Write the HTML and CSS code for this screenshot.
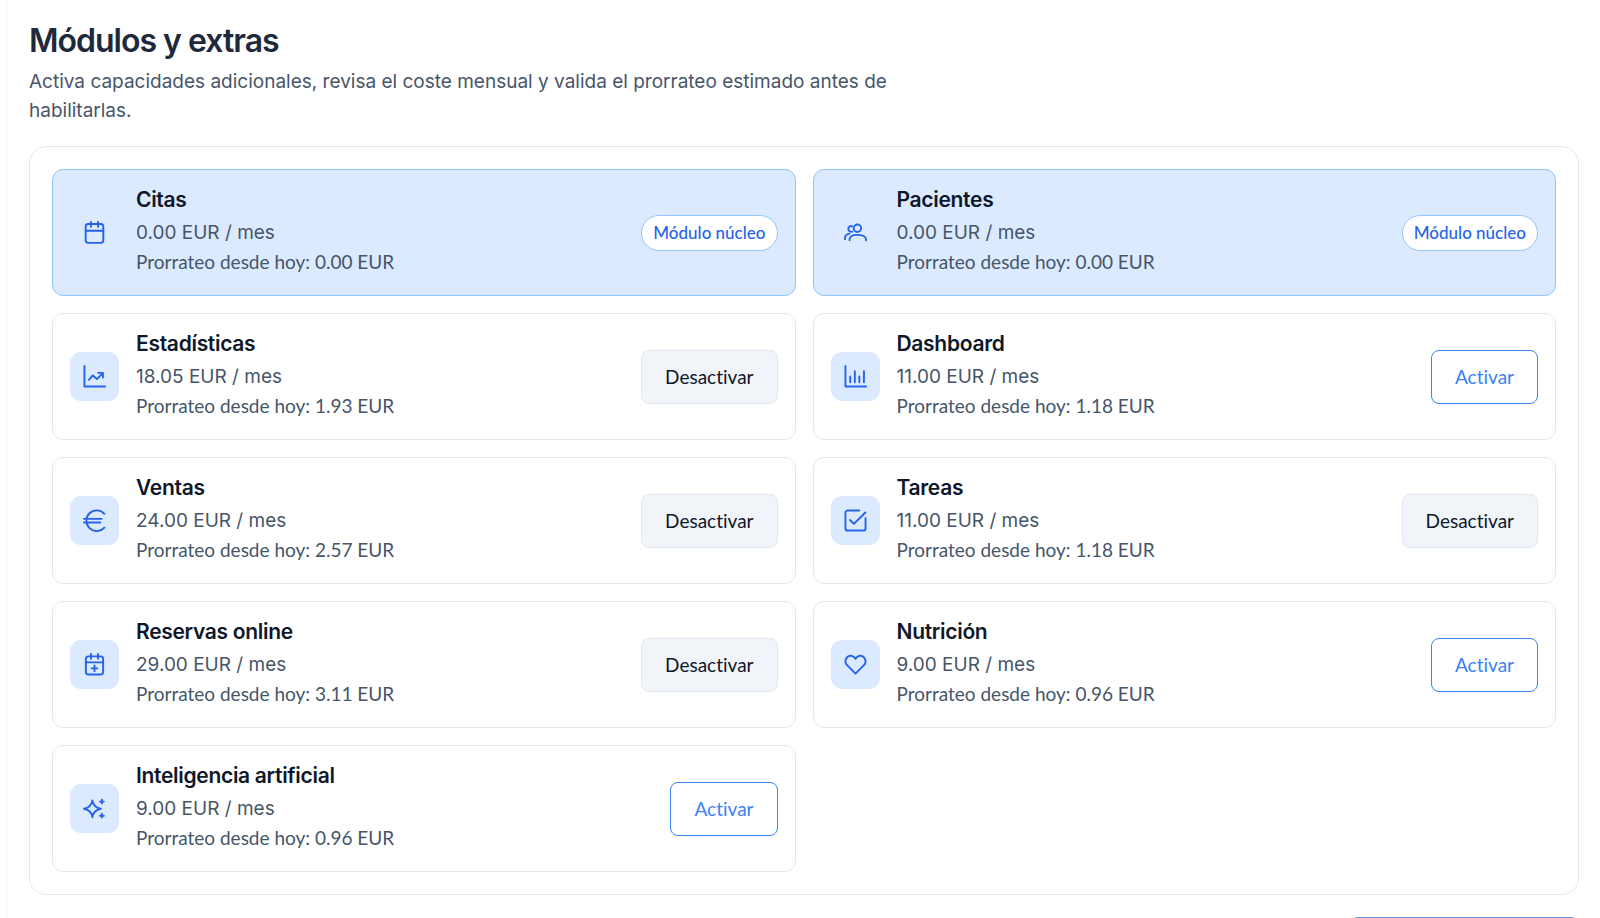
FILE: index.html
```
<!DOCTYPE html>
<html lang="es">
<head>
  <meta charset="UTF-8" />
  <meta name="viewport" content="width=device-width, initial-scale=1.0" />
  <title>Módulos y extras</title>
  <link rel="stylesheet" href="styles.css">
</head>
<body>
  <main class="page">
    <header class="page-header">
      <h1>Módulos y extras</h1>
      <p>Activa capacidades adicionales, revisa el coste mensual y valida el prorrateo estimado antes de habilitarlas.</p>
    </header>

    <section class="panel">
      <article class="module core">
        <div class="module-icon">
          <svg viewBox="0 0 24 24"><rect x="2.8" y="3.2" width="18.4" height="19.6" rx="2.6"/><path d="M2.8 10.2h18.4M8.3 1v5M15.7 1v5"/></svg>
        </div>
        <div class="module-info">
          <h2>Citas</h2>
          <p class="price">0.00 EUR / mes</p>
          <p class="prorate">Prorrateo desde hoy: 0.00 EUR</p>
        </div>
        <span class="badge">Módulo núcleo</span>
      </article>

      <article class="module core">
        <div class="module-icon">
          <svg viewBox="0 0 24 24"><circle cx="14" cy="7.6" r="3.9"/><path d="M5.8 20v-.6c0-3 3-4.9 8.2-4.9s9 1.900 9 4.900v.6M8.600 5.500a3 3 0 1 0 0 5.600M1 19v-.8c0-2.700 1.600-4.400 4.600-5"/></svg>
        </div>
        <div class="module-info">
          <h2>Pacientes</h2>
          <p class="price">0.00 EUR / mes</p>
          <p class="prorate">Prorrateo desde hoy: 0.00 EUR</p>
        </div>
        <span class="badge">Módulo núcleo</span>
      </article>

      <article class="module">
        <div class="module-icon">
          <svg viewBox="0 0 24 24"><path d="M1.500 1v21.500H23M6.200 15.500l4-4.600 4.300 3.800 6.300-6.300M15.800 8.200h5v5"/></svg>
        </div>
        <div class="module-info">
          <h2>Estadísticas</h2>
          <p class="price">18.05 EUR / mes</p>
          <p class="prorate">Prorrateo desde hoy: 1.93 EUR</p>
        </div>
        <button type="button" class="btn btn-off">Desactivar</button>
      </article>

      <article class="module">
        <div class="module-icon">
          <svg viewBox="0 0 24 24"><path d="M1.500 1v21.500H23M6.500 12v6M11.300 6.500V18M16 12v6M20.800 6.500V18"/></svg>
        </div>
        <div class="module-info">
          <h2>Dashboard</h2>
          <p class="price">11.00 EUR / mes</p>
          <p class="prorate">Prorrateo desde hoy: 1.18 EUR</p>
        </div>
        <button type="button" class="btn btn-on">Activar</button>
      </article>

      <article class="module">
        <div class="module-icon">
          <svg viewBox="0 0 24 24"><path d="M22.300 5A10.800 10.800 0 1 0 22.300 19.500M1 10.300h18.500M1 14h17"/></svg>
        </div>
        <div class="module-info">
          <h2>Ventas</h2>
          <p class="price">24.00 EUR / mes</p>
          <p class="prorate">Prorrateo desde hoy: 2.57 EUR</p>
        </div>
        <button type="button" class="btn btn-off">Desactivar</button>
      </article>

      <article class="module">
        <div class="module-icon">
          <svg viewBox="0 0 24 24"><path d="M16 1.500H4A2.500 2.500 0 0 0 1.500 4v16A2.500 2.500 0 0 0 4 22.500h16a2.500 2.500 0 0 0 2.500-2.500V9.500M6.300 11.500l4 4L22.300 3.600"/></svg>
        </div>
        <div class="module-info">
          <h2>Tareas</h2>
          <p class="price">11.00 EUR / mes</p>
          <p class="prorate">Prorrateo desde hoy: 1.18 EUR</p>
        </div>
        <button type="button" class="btn btn-off">Desactivar</button>
      </article>

      <article class="module">
        <div class="module-icon">
          <svg viewBox="0 0 24 24"><rect x="3" y="3.500" width="18" height="19" rx="2.600"/><path d="M3 9.800h18M8.300 1v5M15.700 1v5M12 13v6M9 16h6"/></svg>
        </div>
        <div class="module-info">
          <h2>Reservas online</h2>
          <p class="price">29.00 EUR / mes</p>
          <p class="prorate">Prorrateo desde hoy: 3.11 EUR</p>
        </div>
        <button type="button" class="btn btn-off">Desactivar</button>
      </article>

      <article class="module">
        <div class="module-icon">
          <svg viewBox="0 0 24 24"><path d="M12 21.500L2.700 12.200A6.100 6.100 0 0 1 6.600 2.700C8.800 2.700 10.800 4 12 6c1.200-2 3.200-3.300 5.400-3.300a6.100 6.100 0 0 1 3.900 9.500z"/></svg>
        </div>
        <div class="module-info">
          <h2>Nutrición</h2>
          <p class="price">9.00 EUR / mes</p>
          <p class="prorate">Prorrateo desde hoy: 0.96 EUR</p>
        </div>
        <button type="button" class="btn btn-on">Activar</button>
      </article>

      <article class="module">
        <div class="module-icon">
          <svg viewBox="0 0 24 24"><path d="M9.800 3.500c.8 5 3.300 7.700 8.700 8.800-5.400 1.100-7.900 3.800-8.700 8.800-.8-5-3.300-7.700-8.700-8.800 5.400-1.100 7.900-3.800 8.700-8.800zM19.700 2.800v4M17.700 4.800h4M19.700 17.500v4M17.700 19.500h4"/></svg>
        </div>
        <div class="module-info">
          <h2>Inteligencia artificial</h2>
          <p class="price">9.00 EUR / mes</p>
          <p class="prorate">Prorrateo desde hoy: 0.96 EUR</p>
        </div>
        <button type="button" class="btn btn-on">Activar</button>
      </article>
    </section>

    <footer class="page-footer">
      <button type="button" class="btn btn-save" aria-label="Guardar"></button>
    </footer>
  </main>
</body>
</html>
```
FILE: styles.css
```
* {
  margin: 0;
  padding: 0;
  box-sizing: border-box;
}

body {
  height: 100vh;
  padding-left: 6px;
  overflow: hidden;
  background: #fff;
  color: #1e293b;
  font-family: 'Inter', sans-serif;
}

.page {
  min-height: 100vh;
  padding: 21px 21px 20px 22px;
  border-left: 1px solid #f1f5f9;
}

.page-header {
  margin-bottom: 21px;
}

.page-header h1 {
  font-size: 32px;
  line-height: 40px;
  font-weight: 600;
  letter-spacing: -1px;
  margin-bottom: 6px;
}

.page-header p {
  max-width: 900px;
  font-size: 19px;
  line-height: 29px;
  color: #475569;
}

.panel {
  display: grid;
  grid-template-columns: 1fr 1fr;
  gap: 17px;
  padding: 22px;
  border: 1px solid #e2e8f0;
  border-radius: 17px;
}

.module {
  display: flex;
  align-items: center;
  gap: 17px;
  padding: 10px 17px;
  min-height: 127px;
  border: 1px solid #e2e8f0;
  border-radius: 11px;
}

.module.core {
  background: #dbeafe;
  border-color: #93c5fd;
}

.module-icon {
  display: flex;
  align-items: center;
  justify-content: center;
  flex-shrink: 0;
  width: 49px;
  height: 49px;
  border-radius: 11px;
  background: #dbeafe;
}

.module-icon svg {
  width: 23px;
  height: 23px;
  fill: none;
  stroke: #2563eb;
  stroke-width: 2;
  stroke-linecap: round;
  stroke-linejoin: round;
}

.module-info {
  flex: 1;
  padding-bottom: 7px;
}

.module-info h2 {
  font-size: 21px;
  line-height: 34px;
  font-weight: 600;
  letter-spacing: -0.3px;
  color: #0f172a;
}

.price {
  font-size: 19px;
  line-height: 31px;
  color: #475569;
}

.prorate {
  font-family: 'Lato', sans-serif;
  font-size: 19px;
  line-height: 27px;
  color: #475569;
}

.badge {
  padding: 0 11px;
  border: 1px solid #93c5fd;
  border-radius: 18px;
  background: #fff;
  color: #2563eb;
  font-family: 'Lato', sans-serif;
  font-size: 17px;
  line-height: 34px;
  font-weight: 500;
}

.btn {
  padding: 0 23px;
  border: 1px solid #e2e8f0;
  border-radius: 8px;
  font-family: 'Lato', sans-serif;
  font-size: 19px;
  line-height: 52px;
  font-variant-ligatures: none;
  cursor: pointer;
}

.btn-off {
  background: #f1f5f9;
  color: #0f172a;
}

.btn-on {
  background: #fff;
  border-color: #3b82f6;
  color: #3b82f6;
}

.page-footer {
  display: flex;
  justify-content: flex-end;
  margin-top: 22px;
}

.btn-save {
  min-width: 229px;
  min-height: 54px;
  background: #2563eb;
  border-color: #6093e6;
}
```
